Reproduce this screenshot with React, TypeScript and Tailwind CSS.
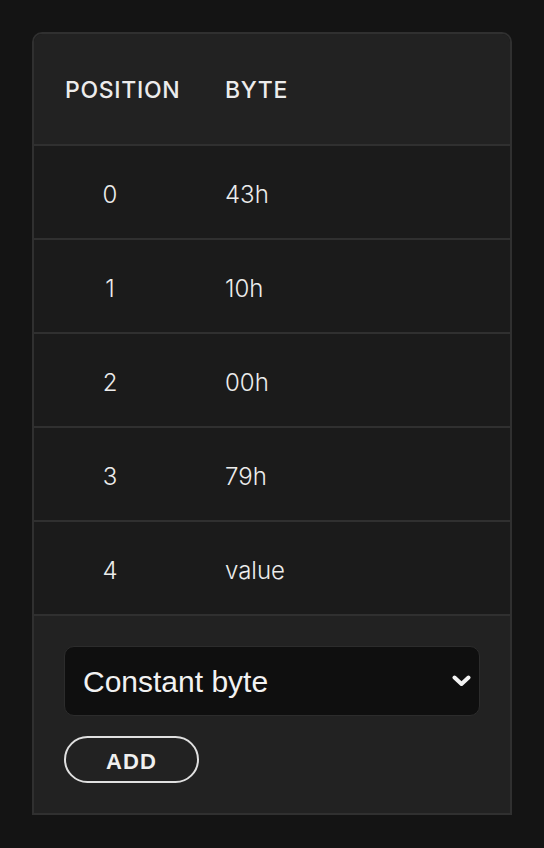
import React from 'react';

const rows = [
  { pos: 0, byte: '43h' },
  { pos: 1, byte: '10h' },
  { pos: 2, byte: '00h' },
  { pos: 3, byte: '79h' },
  { pos: 4, byte: 'value' },
];

export default function App() {
  return (
    <div className="min-h-screen bg-[#141414] pt-8 px-8" style={{ fontFamily: 'Inter, "Noto Sans", sans-serif' }}>
      <div className="w-[480px] border-2 border-[#303030] rounded-t-[10px] overflow-hidden">
        <div className="h-[110px] bg-[#222222] flex items-center text-[#ececec] text-[23px] font-medium tracking-[0.03em] pt-[2px]">
          <div className="w-[160px] pl-[31px]">POSITION</div>
          <div className="pl-[31px]">BYTE</div>
        </div>
        {rows.map(r => (
          <div key={r.pos} className="h-[94px] border-t-2 border-[#303030] bg-[#1b1b1b] flex items-center text-[#ececec] text-[24px] font-light pt-[5px]">
            <div className="w-[160px] flex">
              <div className="ml-[32px] w-[88px] text-center">{r.pos}</div>
            </div>
            <div className="pl-[31px]">{r.byte}</div>
          </div>
        ))}
        <div className="border-t-2 border-[#303030] bg-[#222222] px-[30px] py-[30px] flex flex-col gap-5" style={{ fontFamily: '"Liberation Sans", Arial, sans-serif' }}>
          <div className="h-[70px] w-[416px] rounded-[10px] bg-[#0f0f0f] border border-[#2c2c2c] flex items-center justify-between pl-[18px] pr-[8px]">
            <span className="text-[30px] text-[#f2f2f2]">Constant byte</span>
            <svg width="19" height="12" viewBox="0 0 19 12">
              <path d="M2.5 2.5 L9.5 9 L16.5 2.5" fill="none" stroke="#f2f2f2" strokeWidth="4" strokeLinecap="round" strokeLinejoin="round" />
            </svg>
          </div>
          <div>
            <button className="h-[47px] w-[135px] rounded-full border-2 border-[#e0e0e0] text-[#f0f0f0] text-[22px] font-bold tracking-[0.05em] pt-[3px]">
              ADD
            </button>
          </div>
        </div>
      </div>
    </div>
  );
}
